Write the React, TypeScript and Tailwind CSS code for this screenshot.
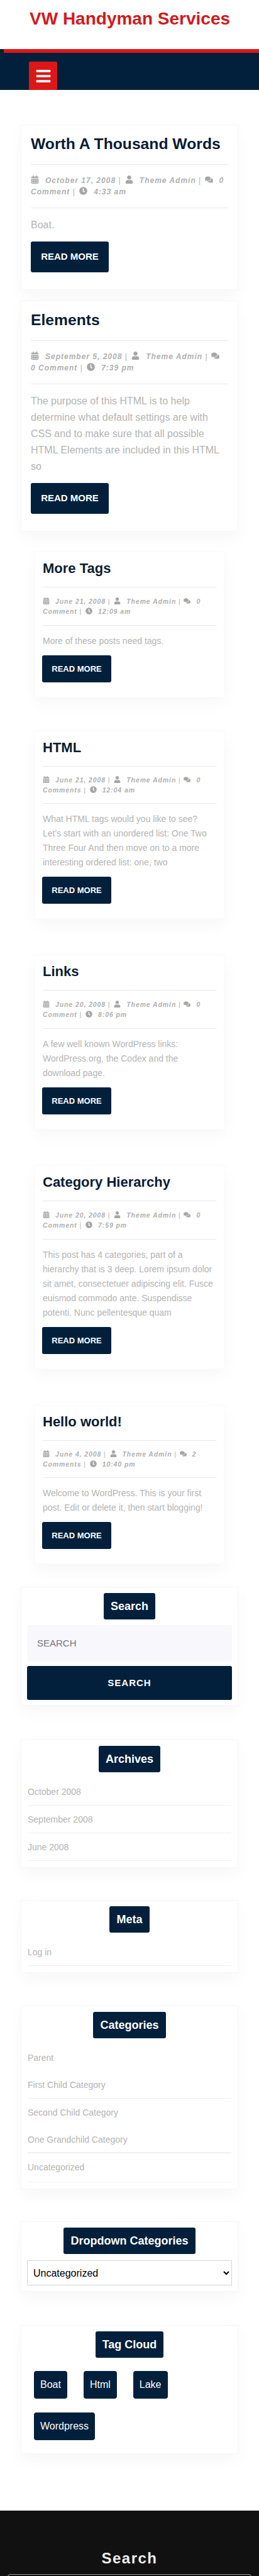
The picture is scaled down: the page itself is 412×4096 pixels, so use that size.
import React from "react";
import { FaBars, FaCalendarAlt, FaClock, FaComments, FaUser } from "react-icons/fa";

type Post = {
  title: string;
  date: string;
  comments: string;
  time: string;
  body: string[];
  gap: string;
  metaPad: string;
};

const bigPosts: Post[] = [
  {
    title: "Worth A Thousand Words",
    date: "October 17, 2008",
    comments: "0 Comment",
    time: "4:33 am",
    body: ["Boat."],
    gap: "mt-[55px]",
    metaPad: "py-[16px]",
  },
  {
    title: "Elements",
    date: "September 5, 2008",
    comments: "0 Comment",
    time: "7:39 pm",
    body: [
      "The purpose of this HTML is to help",
      "determine what default settings are with",
      "CSS and to make sure that all possible",
      "HTML Elements are included in this HTML",
      "so",
    ],
    gap: "mt-[17px]",
    metaPad: "py-[16px]",
  },
];

const smallPosts: Post[] = [
  {
    title: "More Tags",
    date: "June 21, 2008",
    comments: "0 Comment",
    time: "12:09 am",
    body: ["More of these posts need tags."],
    gap: "mt-[32px]",
    metaPad: "py-[14px]",
  },
  {
    title: "HTML",
    date: "June 21, 2008",
    comments: "0 Comments",
    time: "12:04 am",
    body: [
      "What HTML tags would you like to see?",
      "Let's start with an unordered list: One Two",
      "Three Four And then move on to a more",
      "interesting ordered list: one, two",
    ],
    gap: "mt-[53px]",
    metaPad: "py-[13px]",
  },
  {
    title: "Links",
    date: "June 20, 2008",
    comments: "0 Comment",
    time: "8:06 pm",
    body: ["A few well known WordPress links:", "WordPress.org, the Codex and the", "download page."],
    gap: "mt-[57px]",
    metaPad: "py-[14px]",
  },
  {
    title: "Category Hierarchy",
    date: "June 20, 2008",
    comments: "0 Comment",
    time: "7:59 pm",
    body: [
      "This post has 4 categories, part of a",
      "hierarchy that is 3 deep. Lorem ipsum dolor",
      "sit amet, consectetuer adipiscing elit. Fusce",
      "euismod commodo ante. Suspendisse",
      "potenti. Nunc pellentesque quam",
    ],
    gap: "mt-[57px]",
    metaPad: "py-[14px]",
  },
  {
    title: "Hello world!",
    date: "June 4, 2008",
    comments: "2 Comments",
    time: "10:40 pm",
    body: ["Welcome to WordPress. This is your first", "post. Edit or delete it, then start blogging!"],
    gap: "mt-[57px]",
    metaPad: "py-[13px]",
  },
];

const cardLook = "bg-white border border-[#f6f6f6] shadow-[0_10px_25px_rgba(0,0,0,0.035)]";

function Meta({ post, icon }: { post: Post; icon: string }) {
  const base = `inline align-[-1px] text-[#a6a6a6] ${icon}`;
  const sep = <span className="not-italic font-normal"> | </span>;
  return (
    <>
      <FaCalendarAlt className={base} />
      <span>{post.date}</span>
      {sep}
      <FaUser className={`${base} ml-[2px]`} />
      <span>Theme Admin</span>
      {sep}
      <FaComments className={`${base} ml-[1px]`} />
      <span>{post.comments}</span>
      {sep}
      <FaClock className={`${base} ml-[2px]`} />
      <span className="whitespace-nowrap">{post.time}</span>
    </>
  );
}

function BigPost({ post }: { post: Post }) {
  return (
    <article className={`${cardLook} ${post.gap} mx-[33px] w-[346px] px-[15px] pt-[15px] pb-[27px]`}>
      <h2 className="text-[24.7px] leading-[30px] font-bold text-[#0b1d33]">{post.title}</h2>
      <div className={`mt-[17px] border-y border-[#e8e8e8] ${post.metaPad}`}>
        <p className="text-[12px] leading-[18px] italic font-bold tracking-[1px] text-[#b0b0b0]">
          <Meta post={post} icon="text-[13px] mr-[10px]" />
        </p>
      </div>
      <div className="mt-[14px] text-[16px] leading-[26px] text-[#b4b4b4] whitespace-nowrap">
        {post.body.map((l) => (
          <p key={l}>{l}</p>
        ))}
      </div>
      <a className="mt-[13px] flex h-[49px] w-[124px] items-center justify-center rounded-[3px] bg-[#02203c] text-[15px] font-bold text-white">
        READ MORE
      </a>
    </article>
  );
}

function SmallPost({ post }: { post: Post }) {
  return (
    <article className={`${cardLook} ${post.gap} ml-[55px] w-[302px] border-[#fafafa] px-[12px] pt-[11px] pb-[23px]`}>
      <h2 className="text-[22px] leading-[30px] font-bold text-[#0b1d33]">{post.title}</h2>
      <div className={`mt-[14px] border-y border-[#e8e8e8] ${post.metaPad}`}>
        <p className="text-[10.5px] leading-[16px] italic font-bold tracking-[0.9px] text-[#b0b0b0]">
          <Meta post={post} icon="text-[11px] mr-[9px]" />
        </p>
      </div>
      <div className="mt-[13px] text-[14px] leading-[23px] text-[#b4b4b4] whitespace-nowrap">
        {post.body.map((l) => (
          <p key={l}>{l}</p>
        ))}
      </div>
      <a className="-ml-px mt-[11px] flex h-[43px] w-[110px] items-center justify-center rounded-[3px] bg-[#02203c] text-[13px] font-bold text-white">
        READ MORE
      </a>
    </article>
  );
}

function Widget({
  title,
  gap,
  children,
  pad,
}: {
  title: string;
  gap: string;
  children: React.ReactNode;
  pad: string;
}) {
  return (
    <section className={`${cardLook} ${gap} ${pad} mx-[33px] w-[346px] px-[10px] pt-[9px]`}>
      <div className="flex justify-center">
        <h3 className="flex h-[42px] items-center rounded-[3px] bg-[#02203c] px-[11px] text-[18px] font-bold text-white">
          {title}
        </h3>
      </div>
      {children}
    </section>
  );
}

function Links({ items }: { items: { t: string; line: string }[] }) {
  return (
    <ul className="mt-[9px] text-[14px] text-[#b4b4b4]">
      {items.map((i) => (
        <li key={i.t} className={`pt-[10px] leading-[24px] ${i.line}`}>
          {i.t}
        </li>
      ))}
    </ul>
  );
}

const lined = "h-[44px] border-b border-[#efefef]";

export default function App() {
  return (
    <div className="h-[4096px] w-[412px] overflow-hidden bg-white font-['Liberation_Sans',Arial,sans-serif]">
      <header>
        <div className="h-[78px] pl-[47px] pt-[14px]">
          <h1 className="text-[28px] leading-[32px] font-bold text-[#d21a20]">VW Handyman Services</h1>
        </div>
        <div className="h-[65px] bg-[#02203c]">
          <div className="ml-[6px] h-[6px] bg-[#dd1717]" />
          <button className="ml-[46px] mt-[14px] flex h-[45px] w-[45px] items-center justify-center rounded-[2px] bg-[#dd1717] text-white">
            <FaBars className="text-[26px]" />
          </button>
        </div>
      </header>

      <main>
        {bigPosts.map((p) => (
          <BigPost key={p.title} post={p} />
        ))}
        {smallPosts.map((p) => (
          <SmallPost key={p.title} post={p} />
        ))}
      </main>

      <aside>
        <Widget title="Search" gap="mt-[36px]" pad="pb-[8px]">
          <div className="mt-[9px] flex h-[58px] w-[325px] items-center bg-[#f7f7fc] pl-[15px] text-[15px] text-[#767676]">
            SEARCH
          </div>
          <button className="-ml-px mt-[7px] flex h-[54px] w-[326px] items-center justify-center rounded-[3px] bg-[#02203c] text-[15px] font-bold tracking-[1px] text-white">
            SEARCH
          </button>
        </Widget>

        <Widget title="Archives" gap="mt-[54px]" pad="pb-[10px]">
          <Links
            items={[
              { t: "October 2008", line: lined },
              { t: "September 2008", line: lined },
              { t: "June 2008", line: lined },
            ]}
          />
        </Widget>

        <Widget title="Meta" gap="mt-[51px]" pad="pb-[10px]">
          <Links items={[{ t: "Log in", line: lined }]} />
        </Widget>

        <Widget title="Categories" gap="mt-[52px]" pad="pb-[10px]">
          <Links
            items={[
              { t: "Parent", line: "h-[43px]" },
              { t: "First Child Category", line: lined },
              { t: "Second Child Category", line: "h-[43px]" },
              { t: "One Grandchild Category", line: "h-[44px] border-b-2 border-[#efefef]" },
              { t: "Uncategorized", line: "h-[46px] border-b border-[#f4f4f4]" },
            ]}
          />
        </Widget>

        <Widget title="Dropdown Categories" gap="mt-[51px]" pad="pb-[9px]">
          <select className="-ml-px mt-[10px] h-[40px] w-[326px] border border-[#d5d5d5] bg-white pl-[5px] text-[16px] text-black">
            <option>Uncategorized</option>
          </select>
        </Widget>

        <Widget title="Tag Cloud" gap="mt-[53px]" pad="pb-[21px]">
          <div className="mt-[21px] flex flex-wrap gap-x-[26px] gap-y-[22px] pl-[10px]">
            {["Boat", "Html", "Lake", "Wordpress"].map((t) => (
              <a key={t} className="flex h-[44px] items-center rounded-[4px] bg-[#02203c] px-[10px] text-[16px] text-white">
                {t}
              </a>
            ))}
          </div>
        </Widget>
      </aside>

      <footer className="mt-[90px] h-[104px] overflow-hidden bg-[#111111] pt-[62px]">
        <h3 className="text-center text-[24px] leading-[28px] font-bold tracking-[1.5px] text-[#eeeeee]">Search</h3>
        <div className="mx-[12px] mt-[11px] h-[40px] rounded-[4px] border border-[#999999]" />
      </footer>
    </div>
  );
}
